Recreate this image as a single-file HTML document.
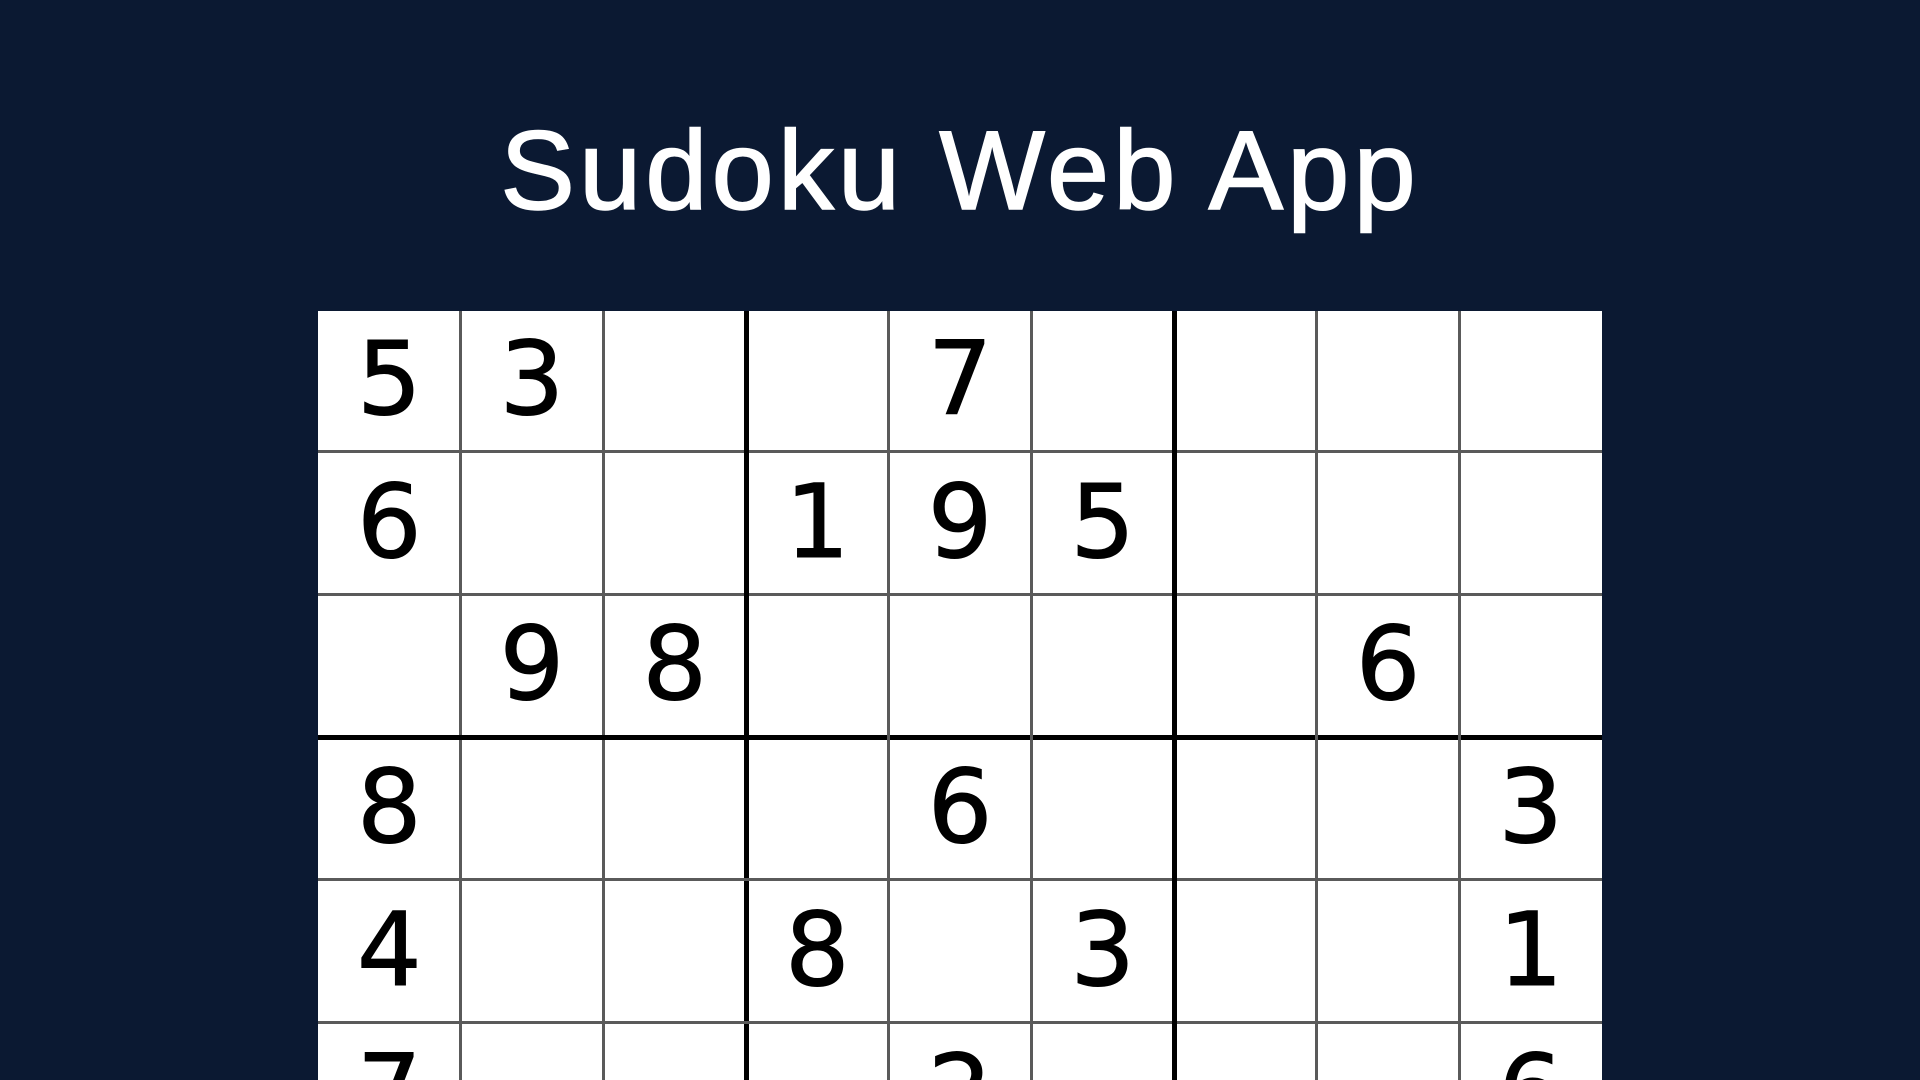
<!DOCTYPE html>
<html><head><meta charset="utf-8"><style>
html,body{margin:0;padding:0;width:1920px;height:1080px;overflow:hidden;background:#0b1932;}
#w{position:absolute;left:0;top:0;width:1920px;height:1080px;overflow:hidden;}
h1{position:absolute;left:0;top:104px;width:1920px;margin:0;text-align:center;color:#fff;font-family:"Liberation Sans",sans-serif;font-weight:normal;font-size:112px;line-height:134px;letter-spacing:4px;-webkit-text-stroke:1.5px #fff;}
#b{position:absolute;left:318px;top:311px;width:1284px;height:769px;background:#fff;overflow:hidden;}
.c{position:absolute;width:142.7px;height:142.7px;text-align:center;line-height:142.7px;font-family:"DejaVu Sans",sans-serif;font-size:102px;color:#000;-webkit-text-stroke:1px #000;}
.v{position:absolute;top:0;height:769px;background:#5a5a5a;width:3px;}
.h{position:absolute;left:0;width:1284px;background:#5a5a5a;height:3px;}
.t{background:#000;}
</style></head><body>
<div id="w">
<h1>Sudoku Web App</h1>
<div id="b"></div>
</div>
<script>
var p=["53..7....","6..195...",".98....6.","8...6...3","4..8.3..1","7...2...6"];
var b=document.getElementById('b'),s=142.67,h='';
for(var r=0;r<p.length;r++)for(var c=0;c<9;c++){var d=p[r][c];if(d!='.')h+='<div class="c" style="left:'+(c*s)+'px;top:'+(r*s-2)+'px">'+d+'</div>';}
for(var i=1;i<9;i++){var t=i%3==0;var w=t?5:3;h+='<div class="v'+(t?' t':'')+'" style="left:'+(i*s-w/2)+'px;width:'+w+'px"></div>';if(i<6)h+='<div class="h'+(t?' t':'')+'" style="top:'+(i*s-w/2-2)+'px;height:'+w+'px"></div>';}
b.innerHTML=h;
</script>
</body></html>
